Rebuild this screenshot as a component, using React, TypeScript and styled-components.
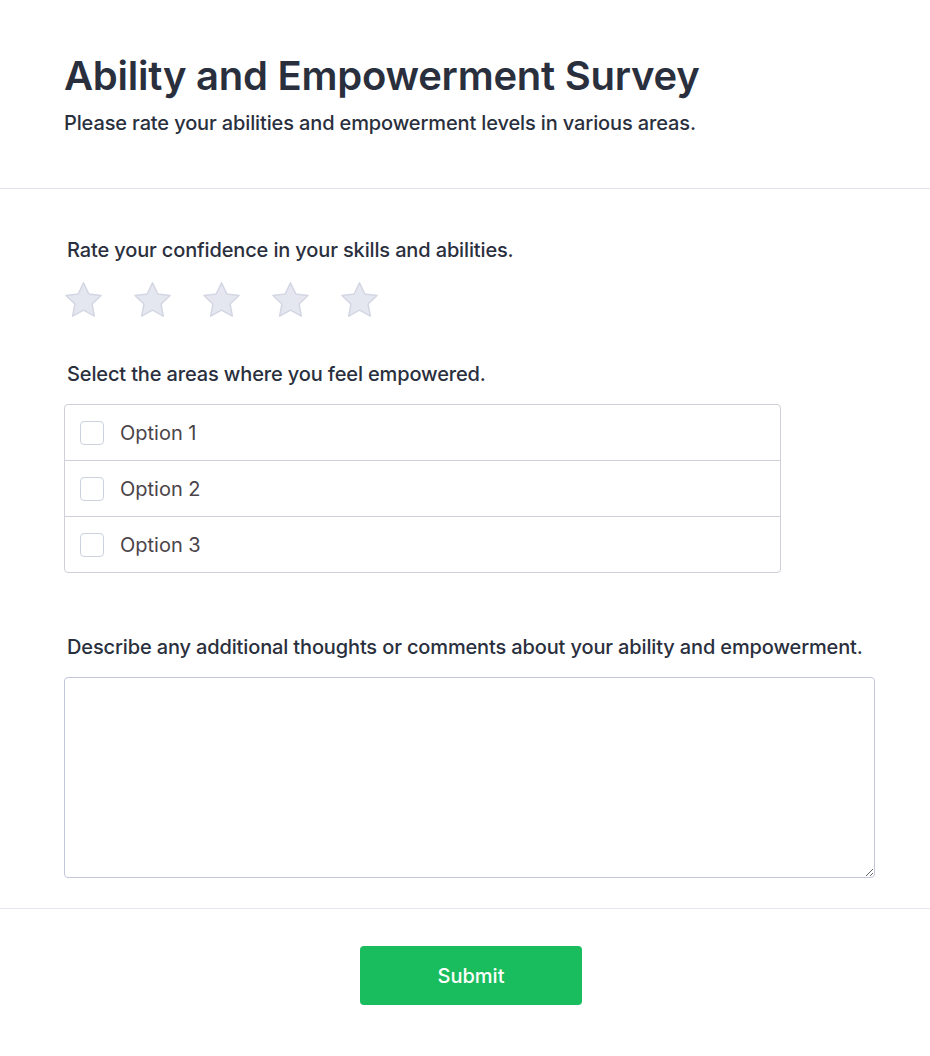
import React from "react";
import styled, { createGlobalStyle } from "styled-components";

const GlobalStyle = createGlobalStyle`
  html, body {
    margin: 0;
    padding: 0;
    background: #ffffff;
    font-family: Inter, "Noto Sans", sans-serif;
    color: #2b2f3a;
  }
  * { box-sizing: border-box; }
`;

const Page = styled.div`
  width: 930px;
  min-height: 1056px;
  background: #fff;
`;

const Header = styled.header`
  padding: 52px 64px 51px;
  border-bottom: 1px solid #e1e3ee;
`;

const Title = styled.h1`
  margin: 0;
  font-size: 40px;
  line-height: 48px;
  font-weight: 600;
  letter-spacing: -0.25px;
  color: #2a2f3d;
`;

const Subtitle = styled.p`
  margin: 9px 0 0;
  font-size: 20px;
  line-height: 28px;
  font-weight: 500;
  letter-spacing: -0.13px;
  color: #2a2f3d;
`;

const Body = styled.main`
  padding: 47px 55px 30px 64px;
  border-bottom: 1px solid #e6e7ee;
`;

const Question = styled.section<{ $gap?: number }>`
  margin-bottom: ${(p) => p.$gap ?? 0}px;
`;

const Label = styled.div<{ $space?: number }>`
  padding-left: 3px;
  font-size: 20px;
  line-height: 28px;
  font-weight: 500;
  letter-spacing: -0.14px;
  color: #2a2f3d;
  margin-bottom: ${(p) => p.$space ?? 16}px;
`;

const Stars = styled.div`
  display: flex;
  gap: 24px;
  margin-left: -3px;
`;

const StarButton = styled.span`
  display: inline-flex;
  width: 45px;
  height: 45px;
  cursor: pointer;
`;

const OptionList = styled.div`
  width: 717px;
  border: 1px solid #cfd0d8;
  border-radius: 4px;
`;

const OptionRow = styled.label`
  display: flex;
  align-items: center;
  gap: 16px;
  height: 55px;
  padding: 0 15px;
  font-size: 20px;
  color: #4a4449;
  cursor: pointer;
  & + & {
    border-top: 1px solid #cfd0d8;
    height: 56px;
  }
`;

const Box = styled.span`
  width: 24px;
  height: 24px;
  border: 1px solid #cdd2de;
  border-radius: 4px;
  background: #fff;
  flex: none;
`;

const TextArea = styled.textarea`
  display: block;
  width: 811px;
  height: 201px;
  border: 1px solid #c3c6d8;
  border-radius: 4px;
  resize: vertical;
  font-family: inherit;
  font-size: 16px;
  padding: 10px;
  outline: none;
`;

const Footer = styled.footer`
  display: flex;
  justify-content: center;
  padding: 37px 0 40px 12px;
`;

const Submit = styled.button`
  width: 222px;
  height: 59px;
  border: none;
  border-radius: 4px;
  background: #1abd5e;
  color: #fff;
  font-family: inherit;
  font-size: 20px;
  font-weight: 500;
  cursor: pointer;
`;

function Star() {
  return (
    <svg width="45" height="45" viewBox="0 0 24 24">
      <path
        d="M12 2.6l2.85 5.95 6.5.82-4.78 4.5 1.22 6.45L12 17.17l-5.79 3.15 1.22-6.45-4.78-4.5 6.5-.82z"
        fill="#e4e6f0"
        stroke="#d4d7e3"
        strokeWidth="0.8"
        strokeLinejoin="round"
      />
    </svg>
  );
}

export default function App() {
  return (
    <Page>
      <GlobalStyle />
      <Header>
        <Title>Ability and Empowerment Survey</Title>
        <Subtitle>Please rate your abilities and empowerment levels in various areas.</Subtitle>
      </Header>
      <Body>
        <Question $gap={37}>
          <Label $space={14}>Rate your confidence in your skills and abilities.</Label>
          <Stars>
            {[1, 2, 3, 4, 5].map((n) => (
              <StarButton key={n}>
                <Star />
              </StarButton>
            ))}
          </Stars>
        </Question>
        <Question $gap={60}>
          <Label>Select the areas where you feel empowered.</Label>
          <OptionList>
            {["Option 1", "Option 2", "Option 3"].map((o) => (
              <OptionRow key={o}>
                <Box />
                {o}
              </OptionRow>
            ))}
          </OptionList>
        </Question>
        <Question>
          <Label>Describe any additional thoughts or comments about your ability and empowerment.</Label>
          <TextArea />
        </Question>
      </Body>
      <Footer>
        <Submit>Submit</Submit>
      </Footer>
    </Page>
  );
}
